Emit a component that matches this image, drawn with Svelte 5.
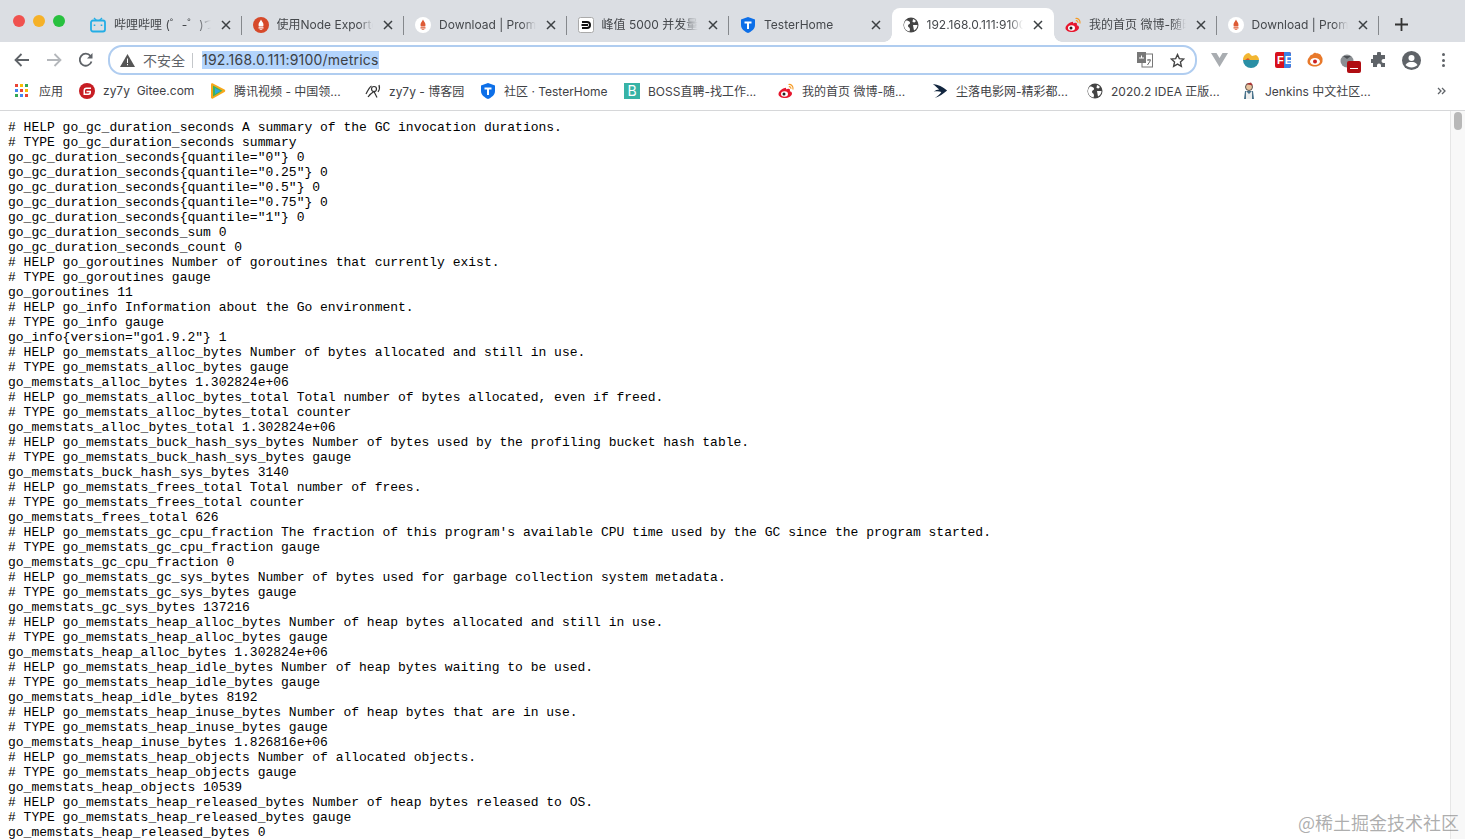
<script>
  const tabs = [
    { title: '哔哩哔哩 (゜-゜)つ', icon: 'bili' },
    { title: '使用Node Exporter', icon: 'prom' },
    { title: 'Download | Prometheus', icon: 'promw' },
    { title: '峰值 5000 并发量', icon: 'dash' },
    { title: 'TesterHome', icon: 'th' },
    { title: '192.168.0.111:9100', icon: 'globe', active: true },
    { title: '我的首页 微博-随时', icon: 'weibo' },
    { title: 'Download | Prometheus', icon: 'promw' }
  ];

  const bookmarks = [
    { title: '应用', icon: 'apps', w: 64 },
    { title: 'zy7y  Gitee.com', icon: 'gitee', w: 131 },
    { title: '腾讯视频 - 中国领...', icon: 'tencent', w: 155 },
    { title: 'zy7y - 博客园', icon: 'cnblogs', w: 115 },
    { title: '社区 · TesterHome', icon: 'th', w: 144 },
    { title: 'BOSS直聘-找工作...', icon: 'boss', w: 154 },
    { title: '我的首页 微博-随...', icon: 'weibo', w: 154 },
    { title: '尘落电影网-精彩都...', icon: 'dash2', w: 155 },
    { title: '2020.2 IDEA 正版...', icon: 'globe', w: 154 },
    { title: 'Jenkins 中文社区...', icon: 'jenkins', w: 150 }
  ];

  const appColors = ['#ea4335', '#fbbc05', '#34a853', '#4285f4', '#ea4335', '#fbbc05', '#34a853', '#4285f4', '#ea4335'];

  const lines = `# HELP go_gc_duration_seconds A summary of the GC invocation durations.
# TYPE go_gc_duration_seconds summary
go_gc_duration_seconds{quantile="0"} 0
go_gc_duration_seconds{quantile="0.25"} 0
go_gc_duration_seconds{quantile="0.5"} 0
go_gc_duration_seconds{quantile="0.75"} 0
go_gc_duration_seconds{quantile="1"} 0
go_gc_duration_seconds_sum 0
go_gc_duration_seconds_count 0
# HELP go_goroutines Number of goroutines that currently exist.
# TYPE go_goroutines gauge
go_goroutines 11
# HELP go_info Information about the Go environment.
# TYPE go_info gauge
go_info{version="go1.9.2"} 1
# HELP go_memstats_alloc_bytes Number of bytes allocated and still in use.
# TYPE go_memstats_alloc_bytes gauge
go_memstats_alloc_bytes 1.302824e+06
# HELP go_memstats_alloc_bytes_total Total number of bytes allocated, even if freed.
# TYPE go_memstats_alloc_bytes_total counter
go_memstats_alloc_bytes_total 1.302824e+06
# HELP go_memstats_buck_hash_sys_bytes Number of bytes used by the profiling bucket hash table.
# TYPE go_memstats_buck_hash_sys_bytes gauge
go_memstats_buck_hash_sys_bytes 3140
# HELP go_memstats_frees_total Total number of frees.
# TYPE go_memstats_frees_total counter
go_memstats_frees_total 626
# HELP go_memstats_gc_cpu_fraction The fraction of this program's available CPU time used by the GC since the program started.
# TYPE go_memstats_gc_cpu_fraction gauge
go_memstats_gc_cpu_fraction 0
# HELP go_memstats_gc_sys_bytes Number of bytes used for garbage collection system metadata.
# TYPE go_memstats_gc_sys_bytes gauge
go_memstats_gc_sys_bytes 137216
# HELP go_memstats_heap_alloc_bytes Number of heap bytes allocated and still in use.
# TYPE go_memstats_heap_alloc_bytes gauge
go_memstats_heap_alloc_bytes 1.302824e+06
# HELP go_memstats_heap_idle_bytes Number of heap bytes waiting to be used.
# TYPE go_memstats_heap_idle_bytes gauge
go_memstats_heap_idle_bytes 8192
# HELP go_memstats_heap_inuse_bytes Number of heap bytes that are in use.
# TYPE go_memstats_heap_inuse_bytes gauge
go_memstats_heap_inuse_bytes 1.826816e+06
# HELP go_memstats_heap_objects Number of allocated objects.
# TYPE go_memstats_heap_objects gauge
go_memstats_heap_objects 10539
# HELP go_memstats_heap_released_bytes Number of heap bytes released to OS.
# TYPE go_memstats_heap_released_bytes gauge
go_memstats_heap_released_bytes 0`;
</script>

{#snippet favicon(name)}
  {#if name === 'bili'}
    <svg width="16" height="16" viewBox="0 0 16 16"><path d="M4 1l2.500 2.500M12 1L9.500 3.500" stroke="#23ade5" stroke-width="1.400" fill="none"/><rect x="1" y="3.500" width="14" height="11" rx="2" fill="none" stroke="#23ade5" stroke-width="1.800"/><path d="M4.500 7.500v1.500M11.500 7.500v1.500" stroke="#23ade5" stroke-width="1.600"/></svg>
  {:else if name === 'prom'}
    <svg width="16" height="16" viewBox="0 0 16 16"><circle cx="8" cy="8" r="8" fill="#d6492a"/><path d="M8 2.500c.6 1.800 2.500 2.800 2.500 5.500l-.3 1.500H5.800L5.500 8C5.500 5.300 7.400 4.300 8 2.500zM5.500 10.300h5v1.200h-5zM6.300 12.200h3.400c-.3 1-3.100 1-3.400 0z" fill="#fff"/></svg>
  {:else if name === 'promw'}
    <svg width="16" height="16" viewBox="0 0 16 16"><circle cx="8" cy="8" r="8" fill="#fff"/><path d="M8 2.500c.6 1.800 2.500 2.800 2.500 5.500l-.3 1.500H5.800L5.500 8C5.500 5.300 7.400 4.300 8 2.500zM5.500 10.300h5v1.200h-5zM6.300 12.200h3.400c-.3 1-3.100 1-3.400 0z" fill="#dd5a35"/></svg>
  {:else if name === 'dash'}
    <svg width="16" height="16" viewBox="0 0 16 16"><rect x=".5" y=".5" width="15" height="15" rx="2" fill="#fff" stroke="#aaa"/><path d="M4 5h5a3 3 0 0 1 0 6H4M3.500 8H10" stroke="#111" stroke-width="2" fill="none"/></svg>
  {:else if name === 'th'}
    <svg width="16" height="16" viewBox="0 0 16 16"><path d="M8 0l7 2.500v5.500c0 4-3.500 6.500-7 8-3.500-1.500-7-4-7-8V2.500z" fill="#0d6fe8"/><path d="M4.500 4.500h7v2H9V12H7V6.500H4.500z" fill="#fff"/></svg>
  {:else if name === 'globe'}
    <svg width="16" height="16" viewBox="0 0 16 16"><circle cx="8" cy="8" r="7.500" fill="#444"/><path d="M3 3.500c1.500 0 3.500.5 4 2S5.500 7 5 8.500 7 10 7 12.500l-.5 2C3.500 14 1 11.500 1 8c0-1.800.8-3.300 2-4.500zM10 2c1 .3 2 1 3 2l-1.500 1.500L9.500 5zM10 8h4.500c0 2.500-1.500 4.500-3.500 5.500L10.500 11z" fill="#fff"/></svg>
  {:else if name === 'weibo'}
    <svg width="16" height="16" viewBox="0 0 16 16"><path d="M7 5c-3 .5-6.500 3.500-6.500 6S3.500 15 7 15s7-2 7-4.500c0-1.500-1.500-2-2.200-2.200.5-1.300.3-2.800-1.800-2.500-1 .2-1.500.6-1.800.6-.2-.8 0-2-1.200-1.400z" fill="#e6162d"/><ellipse cx="6.500" cy="11" rx="3.500" ry="2.700" fill="#fff"/><circle cx="6" cy="11" r="1.500" fill="#222"/><path d="M10.500 1.500c2.500-.5 5 1.500 4.500 5M10.800 3.700c1.300-.2 2.400.8 2.100 2.200" stroke="#f59a23" stroke-width="1.100" fill="none"/></svg>
  {:else if name === 'apps'}
    <span class="apps">
      {#each appColors as color}
        <i style="background: {color}"></i>
      {/each}
    </span>
  {:else if name === 'gitee'}
    <svg width="16" height="16" viewBox="0 0 16 16"><circle cx="8" cy="8" r="8" fill="#c71d23"/><path d="M12 4.500H7.500a3 3 0 0 0-3 3V12h5a2.500 2.500 0 0 0 2.500-2.500V7.800H7.500v1.500h3c0 .7-.5 1.200-1.200 1.200H6V7.500c0-.8.700-1.500 1.500-1.500H12z" fill="#fff"/></svg>
  {:else if name === 'tencent'}
    <svg width="16" height="16" viewBox="0 0 16 16"><path d="M1 1.500C1 .5 2 0 3 .5l11.500 6c1 .6 1 2 0 2.600L3 15.500c-1 .5-2 0-2-1z" fill="#f7a81b"/><path d="M3 2.500l9.500 5.300L3 13.500z" fill="#3fb35c"/><path d="M5 5l5.500 3L5 11z" fill="#2ea7e0"/></svg>
  {:else if name === 'cnblogs'}
    <svg width="16" height="16" viewBox="0 0 16 16" fill="none" stroke="#333" stroke-width="1.200"><circle cx="9" cy="6" r="2.500"/><path d="M1 11c2-4 3.500-7 5.500-8M3 14c2-3 3.500-4 6-5.500l3 6M14 2c1 3 .5 5-1 7"/></svg>
  {:else if name === 'boss'}
    <span class="boss">B</span>
  {:else if name === 'dash2'}
    <svg width="18" height="16" viewBox="0 0 18 16"><path d="M1 0c6 .5 11 3 16 7.500-4 3.500-9 7-14 8.500 3-2 6-4.500 7.500-7-2.500-1-5-1-8.500-.5 2-1.500 4-2 6-2.300C6 4.500 4 2.500 1 0z" fill="#12263f"/></svg>
  {:else if name === 'jenkins'}
    <svg width="16" height="18" viewBox="0 0 16 18"><circle cx="8" cy="5" r="3.500" fill="#e8c39e" stroke="#333" stroke-width=".8"/><path d="M4 9h8l1 8H3z" fill="#49728b"/><path d="M5 9l3 3 3-3v8H5z" fill="#eee"/><path d="M5 2l5-1.500 2 3z" fill="#a33"/></svg>
  {/if}
{/snippet}

<div class="browser">
  <header class="tabstrip">
    <div class="traffic">
      <span class="dot red"></span>
      <span class="dot yellow"></span>
      <span class="dot green"></span>
    </div>
    {#each tabs as tab, i}
      <div class="tab" class:active={tab.active} class:nosep={tab.active || tabs[i + 1]?.active}>
        <span class="tab-icon">{@render favicon(tab.icon)}</span>
        <span class="tab-title">{tab.title}</span>
        <svg class="tab-close" width="10" height="10" viewBox="0 0 10 10"><path d="M1 1l8 8M9 1l-8 8" stroke="#3c4043" stroke-width="1.500"/></svg>
      </div>
    {/each}
    <svg class="newtab" width="13" height="13" viewBox="0 0 13 13"><path d="M6.500 0v13M0 6.500h13" stroke="#333" stroke-width="1.800"/></svg>
  </header>

  <div class="toolbar">
    <svg class="nav first" width="16" height="14" viewBox="0 0 16 14"><path d="M15 7H2M7.500 1L1.500 7l6 6" stroke="#5f6368" stroke-width="1.800" fill="none"/></svg>
    <svg class="nav" width="16" height="14" viewBox="0 0 16 14"><path d="M1 7h13M8.500 1l6 6-6 6" stroke="#b4b7bb" stroke-width="1.800" fill="none"/></svg>
    <svg class="nav" width="16" height="16" viewBox="0 0 16 16"><path d="M13.500 9.500A6 6 0 1 1 12.500 4" stroke="#5f6368" stroke-width="1.800" fill="none"/><path d="M14.500 1v5.500H9z" fill="#5f6368"/></svg>

    <div class="omnibox">
      <svg width="15" height="13" viewBox="0 0 15 13"><path d="M7.500 0L15 13H0z" fill="#555"/><path d="M7 4.500h1V9H7zM7 10h1v1.200H7z" fill="#fff"/></svg>
      <span class="insecure">不安全</span>
      <span class="divider"></span>
      <span class="url">192.168.0.111:9100/metrics</span>
      <svg class="translate" width="16" height="16" viewBox="0 0 16 16"><rect x="5" y="2" width="10.500" height="13" fill="#fff" stroke="#777"/><rect x="0" y="0" width="9" height="11" fill="#777"/><path d="M2 6h5M4.500 3.500V6" stroke="#fff" stroke-width="1"/><path d="M10 8h4M12 7v1.500M10.500 13l3-4.500" stroke="#666" stroke-width="1" fill="none"/></svg>
      <svg class="star" width="15" height="15" viewBox="0 0 24 24"><path d="M12 2.500l2.900 6.500 7.100.7-5.300 4.700 1.500 7-6.200-3.600-6.200 3.600 1.500-7L2 9.700l7.100-.7z" fill="none" stroke="#444" stroke-width="2.200"/></svg>
    </div>

    <div class="extensions">
      <svg width="17" height="14" viewBox="0 0 17 14"><path d="M0 0h5.500l3 5 3-5H17L8.500 14z" fill="#a9adb1"/></svg>
      <svg width="16" height="16" viewBox="0 0 16 16"><path d="M0 8a8 8 0 0 0 16 0z" fill="#2a8fa5"/><path d="M0 8c0-4 3-7 6-7l3 3 4-1c2 1 3 3 3 5z" fill="#f2b632"/><path d="M2 8l3-2 2 2z" fill="#d9552b"/></svg>
      <span class="fe"><span>F</span><span class="fe-e">E</span></span>
      <svg width="16" height="16" viewBox="0 0 16 16"><path d="M8 .5c1 1.500 2.500 0 3 1 1 .5 3 .5 3 2 1 1.500 2 3 1.500 4.500.5 4-3.500 6.500-7.500 6.500S.5 13 .5 9.500c0-2.500 1-3.500 2-4.500 0-1.500 2-2.500 3-2.500C6.500 1.500 7 1 8 .5z" fill="#e8792b"/><ellipse cx="8" cy="9.500" rx="5" ry="3.500" fill="#fff"/><circle cx="8" cy="9.500" r="2" fill="#c22"/></svg>
      <span class="tomato">
        <svg width="15" height="15" viewBox="0 0 15 15"><circle cx="7" cy="8" r="6.500" fill="#8b8f93"/><path d="M3 3h8L7 6z" fill="#4d5155"/></svg>
        <span class="badge"></span>
      </span>
      <svg width="16" height="16" viewBox="0 0 16 16"><path d="M6 1.500a2 2 0 0 1 4 0V3h4v4h-1.500a2 2 0 0 0 0 4H14v4h-4v-1.500a2 2 0 0 0-4 0V15H2v-4H.5a2 2 0 0 1 0-4H2V3h4z" fill="#5f6368"/></svg>
      <svg width="19" height="19" viewBox="0 0 19 19"><circle cx="9.500" cy="9.500" r="9.500" fill="#5f6368"/><circle cx="9.500" cy="7" r="3" fill="#fff"/><path d="M3.500 14c1.500-2.500 3.500-3 6-3s4.500.5 6 3c-3 3.300-9 3.300-12 0z" fill="#fff"/></svg>
      <span class="menu"><i></i><i></i><i></i></span>
    </div>
  </div>

  <nav class="bookmarks">
    {#each bookmarks as mark}
      <div class="mark" style="width: {mark.w}px">
        <span class="mark-icon">{@render favicon(mark.icon)}</span>
        <span class="mark-title">{mark.title}</span>
      </div>
    {/each}
    <svg class="more" width="9" height="8" viewBox="0 0 9 8"><path d="M1 1l3 3-3 3M5 1l3 3-3 3" stroke="#5f6368" stroke-width="1.300" fill="none"/></svg>
  </nav>

  <main class="page">
    <pre>{lines}</pre>
    <aside class="scrollbar"><span class="thumb"></span></aside>
    <span class="watermark">@稀土掘金技术社区</span>
  </main>
</div>

<style>
  :global(body) {
    margin: 0;
    overflow: hidden;
    background: #fff;
  }

  .browser {
    width: 1465px;
    height: 839px;
    display: flex;
    flex-direction: column;
    overflow: hidden;
    font-family: Inter, "Noto Sans CJK SC", sans-serif;
    color: #3c4043;
  }

  .tabstrip {
    height: 42px;
    flex: none;
    display: flex;
    align-items: flex-end;
    background: #dbdee3;
  }

  .traffic {
    width: 79px;
    height: 42px;
    flex: none;
    display: flex;
    gap: 8px;
    padding: 15px 0 0 13px;
    box-sizing: border-box;
  }

  .dot {
    width: 12px;
    height: 12px;
    border-radius: 50%;
  }

  .red { background: #f0524f; }
  .yellow { background: #f5b128; }
  .green { background: #28c13f; }

  .tab {
    width: 162.500px;
    height: 34px;
    flex: none;
    box-sizing: border-box;
    display: flex;
    align-items: center;
    padding: 0 11px 0 11px;
    font-size: 12px;
    line-height: 15px;
    color: #45484c;
    position: relative;
  }

  .tab::after {
    content: "";
    position: absolute;
    right: 0;
    top: 8px;
    width: 1px;
    height: 19px;
    background: #85888c;
  }

  .tab.nosep::after {
    display: none;
  }

  .tab.active {
    background: #fff;
    border-radius: 8px 8px 0 0;
  }

  .tab.active::before,
  .tab.active::after {
    content: "";
    display: block;
    position: absolute;
    top: auto;
    bottom: 0;
    width: 8px;
    height: 8px;
  }

  .tab.active::before {
    left: -8px;
    background: radial-gradient(circle at 0 0, #dbdee3 7.500px, #fff 8px);
  }

  .tab.active::after {
    right: -8px;
    background: radial-gradient(circle at 100% 0, #dbdee3 7.500px, #fff 8px);
  }

  .tab-icon {
    width: 16px;
    height: 16px;
    flex: none;
    margin-right: 8px;
    display: flex;
  }

  .tab-title {
    flex: 1;
    min-width: 0;
    overflow: hidden;
    white-space: nowrap;
    margin-top: -2px;
    -webkit-mask-image: linear-gradient(to right, #000 85%, transparent);
    mask-image: linear-gradient(to right, #000 85%, transparent);
  }

  .tab-close {
    flex: none;
    margin-left: 10px;
  }

  .newtab {
    margin: 0 0 11px 16px;
  }

  .toolbar {
    height: 36px;
    flex: none;
    display: flex;
    align-items: center;
    background: #fff;
  }

  .nav {
    margin-left: 16px;
    flex: none;
  }

  .nav.first {
    margin-left: 14px;
  }

  .omnibox {
    width: 1065px;
    height: 26px;
    margin-left: 14px;
    padding: 0 10px 0 10px;
    flex: none;
    display: flex;
    align-items: center;
    border: 2px solid #b0cdf0;
    border-radius: 14px;
    background: #fff;
    font-size: 14px;
  }

  .insecure {
    margin-left: 8px;
    color: #5f6368;
  }

  .divider {
    width: 1px;
    height: 15px;
    margin: 0 9px 0 7px;
    background: #c4c7ca;
  }

  .url {
    background: #b3d4fc;
    color: #3c4043;
    line-height: 18px;
    letter-spacing: 0.22px;
    flex: none;
  }

  .translate {
    margin-left: auto;
  }

  .star {
    margin-left: 17px;
  }

  .extensions {
    display: grid;
    grid-auto-flow: column;
    grid-auto-columns: 32px;
    justify-items: center;
    align-items: center;
    margin-left: 6px;
  }

  .fe {
    width: 16px;
    height: 16px;
    display: flex;
    overflow: hidden;
    border-radius: 2px;
    background: #d8101c;
    color: #fff;
    font: bold 11px/16px "Liberation Sans", sans-serif;
    padding-left: 2px;
    box-sizing: border-box;
  }

  .fe-e {
    background: #3b82e6;
    padding-left: 1px;
    flex: 1;
  }

  .tomato {
    position: relative;
    width: 15px;
    height: 15px;
    display: flex;
  }

  .badge {
    position: absolute;
    left: 7px;
    top: 8px;
    width: 14px;
    height: 12px;
    background: #b00d12;
    border-radius: 2px;
  }

  .badge::after {
    content: "";
    position: absolute;
    left: 3px;
    top: 7px;
    width: 8px;
    height: 1.500px;
    background: #fff;
  }

  .menu {
    display: flex;
    flex-direction: column;
    gap: 2.500px;
  }

  .menu i {
    width: 3px;
    height: 3px;
    border-radius: 50%;
    background: #5f6368;
  }

  .bookmarks {
    height: 33px;
    flex: none;
    display: flex;
    align-items: center;
    padding: 0 0 7px 15px;
    box-sizing: border-box;
    background: #fff;
    border-bottom: 1px solid #d6d7d9;
    font-size: 12px;
    white-space: nowrap;
    color: #3f4246;
  }

  .mark {
    display: flex;
    align-items: center;
    flex: none;
  }

  .mark-title {
    white-space: pre;
  }

  .mark-icon {
    width: 16px;
    height: 18px;
    margin-right: 8px;
    display: flex;
    align-items: center;
    flex: none;
  }

  .apps {
    display: grid;
    grid-template-columns: repeat(3, 3px);
    gap: 2px;
  }

  .apps i {
    width: 3px;
    height: 3px;
  }

  .boss {
    width: 16px;
    height: 16px;
    background: #37b3a6;
    color: #fff;
    font-size: 14px;
    line-height: 16px;
    text-align: center;
  }

  .more {
    margin-left: auto;
    margin-right: 19px;
  }

  .page {
    flex: 1;
    min-height: 0;
    position: relative;
    background: #fff;
  }

  pre {
    margin: 0;
    padding: 9px 8px 0;
    font: 13px/15px "Liberation Mono", monospace;
    color: #000;
  }

  .scrollbar {
    position: absolute;
    top: 0;
    right: 0;
    bottom: 0;
    width: 14px;
    background: #f8f8f8;
    border-left: 1px solid #e6e6e6;
  }

  .thumb {
    position: absolute;
    top: 1px;
    left: 3px;
    width: 8px;
    height: 18px;
    border-radius: 4px;
    background: #b8b8b8;
  }

  .watermark {
    position: absolute;
    right: 6px;
    bottom: 6px;
    font: 18px/22px "Noto Sans CJK SC", serif;
    color: rgba(120, 120, 120, 0.6);
  }
</style>
